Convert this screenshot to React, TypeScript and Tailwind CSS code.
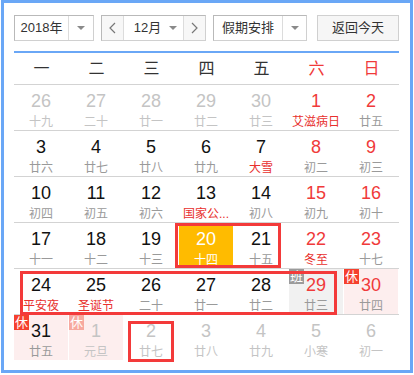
import React from "react";

type Day = {
  n: number;
  l: string;
  out?: boolean;
  red?: boolean;
  lred?: boolean;
  today?: boolean;
  badge?: "休" | "班";
  bg?: "pink" | "gray";
  fade?: boolean;
};

const rows: Day[][] = [
  [
    { n: 26, l: "十九", out: true },
    { n: 27, l: "二十", out: true },
    { n: 28, l: "廿一", out: true },
    { n: 29, l: "廿二", out: true },
    { n: 30, l: "廿三", out: true },
    { n: 1, l: "艾滋病日", red: true, lred: true },
    { n: 2, l: "廿五", red: true },
  ],
  [
    { n: 3, l: "廿六" },
    { n: 4, l: "廿七" },
    { n: 5, l: "廿八" },
    { n: 6, l: "廿九" },
    { n: 7, l: "大雪", lred: true },
    { n: 8, l: "初二", red: true },
    { n: 9, l: "初三", red: true },
  ],
  [
    { n: 10, l: "初四" },
    { n: 11, l: "初五" },
    { n: 12, l: "初六" },
    { n: 13, l: "国家公...", lred: true },
    { n: 14, l: "初八" },
    { n: 15, l: "初九", red: true },
    { n: 16, l: "初十", red: true },
  ],
  [
    { n: 17, l: "十一" },
    { n: 18, l: "十二" },
    { n: 19, l: "十三" },
    { n: 20, l: "十四", today: true },
    { n: 21, l: "十五" },
    { n: 22, l: "冬至", red: true, lred: true },
    { n: 23, l: "十七", red: true },
  ],
  [
    { n: 24, l: "平安夜", lred: true },
    { n: 25, l: "圣诞节", lred: true },
    { n: 26, l: "二十" },
    { n: 27, l: "廿一" },
    { n: 28, l: "廿二" },
    { n: 29, l: "廿三", red: true, badge: "班", bg: "gray" },
    { n: 30, l: "廿四", red: true, badge: "休", bg: "pink" },
  ],
  [
    { n: 31, l: "廿五", badge: "休", bg: "pink" },
    { n: 1, l: "元旦", out: true, badge: "休", bg: "pink", fade: true },
    { n: 2, l: "廿七", out: true },
    { n: 3, l: "廿八", out: true },
    { n: 4, l: "廿九", out: true },
    { n: 5, l: "小寒", out: true },
    { n: 6, l: "初一", out: true },
  ],
];

const weekdays = ["一", "二", "三", "四", "五", "六", "日"];

function Caret() {
  return <span className="w-0 h-0 border-l-[4px] border-r-[4px] border-t-[4px] border-l-transparent border-r-transparent border-t-[#8a8a8a]" />;
}

function Cell({ d }: { d: Day }) {
  let bg = "";
  if (d.today) bg = "bg-[#ffbb00]";
  else if (d.bg === "pink") bg = "bg-[#fdeeee]";
  else if (d.bg === "gray") bg = "bg-[#f1f1f1]";

  let numColor = "text-[#111]";
  let lunarColor = "text-[#9a9a9a]";
  if (d.out) {
    numColor = "text-[#c4c4c4]";
    lunarColor = "text-[#c4c4c4]";
  } else if (d.red) numColor = "text-[#f03a3a]";
  if (!d.out && d.lred) lunarColor = "text-[#e8302e]";
  if (d.today) {
    numColor = "text-white";
    lunarColor = "text-white";
  }

  return (
    <div className="relative h-[45px]">
      <div className={`h-full mr-px flex flex-col items-center pt-[6px] ${bg}`}>
        <span className={`text-[18px] leading-[20px] ${numColor}`}>{d.n}</span>
        <span className={`text-[12px] leading-[16px] mt-[3px] whitespace-nowrap ${lunarColor}`}>{d.l}</span>
      </div>
      {d.badge && (
        <span
          className={`absolute left-0 top-0 w-[15px] h-[15px] text-[13px] leading-[15px] text-center text-white ${
            d.badge === "班" ? "bg-[#9b9b9b]" : d.fade ? "bg-[#f7a99f]" : "bg-[#f5402e]"
          }`}
        >
          {d.badge}
        </span>
      )}
    </div>
  );
}

export default function App() {
  return (
    <div className="relative w-[414px] h-[375px] bg-white font-['Liberation_Sans','Noto_Sans_CJK_SC',sans-serif] text-[#333]">
      <div className="ml-px w-[412px] h-[373px] border-[3px] border-[#6aa7f6] pl-[10px] pr-[11px] pt-[12px]">
        {/* toolbar */}
        <div className="flex h-[26px] text-[13px]">
          <div className="w-[80px] flex border border-[#b9b9b9] border-r-[#d0d0d0] border-b-[#d0d0d0]">
            <div className="w-[54px] flex items-center justify-center border-r border-[#dcdcdc]">2018年</div>
            <div className="flex-1 flex items-center justify-center"><Caret /></div>
          </div>
          <div className="ml-[7px] w-[105px] flex border border-[#b9b9b9] border-r-[#d0d0d0] border-b-[#d0d0d0]">
            <div className="w-[22px] flex items-center justify-center bg-[#f7f7f7] border-r border-[#dcdcdc]">
              <svg width="7" height="12" viewBox="0 0 7 12"><polyline points="6,1 1,6 6,11" fill="none" stroke="#777" strokeWidth="1.2" /></svg>
            </div>
            <div className="w-[59px] flex items-center justify-center gap-[8px] pl-[4px]">
              <span>12月</span>
              <Caret />
            </div>
            <div className="flex-1 flex items-center justify-center bg-[#f7f7f7] border-l border-[#dcdcdc]">
              <svg width="7" height="12" viewBox="0 0 7 12"><polyline points="1,1 6,6 1,11" fill="none" stroke="#777" strokeWidth="1.2" /></svg>
            </div>
          </div>
          <div className="ml-[7px] w-[94px] flex border border-[#b9b9b9] border-r-[#d0d0d0] border-b-[#d0d0d0]">
            <div className="w-[69px] flex items-center justify-center border-r border-[#dcdcdc]">假期安排</div>
            <div className="flex-1 flex items-center justify-center"><Caret /></div>
          </div>
          <button className="ml-[10px] w-[82px] flex items-center justify-center bg-[#f6f6f6] border border-[#d0d0d0] text-[#333]">
            返回今天
          </button>
        </div>

        <div className="mt-[10px] h-[2px] bg-[#6aa7f6]" />

        {/* weekday header */}
        <div className="grid grid-cols-7 h-[32px] border-b border-[#d3d3d3] text-[16px]">
          {weekdays.map((w, i) => (
            <div key={w} className={`flex items-center justify-center ${i >= 5 ? "text-[#f03a3a]" : "text-[#333]"}`}>
              {w}
            </div>
          ))}
        </div>

        {rows.map((r, ri) => (
          <div key={ri} className={`grid grid-cols-7 ${ri < 5 ? "border-b border-[#d3d3d3]" : ""}`}>
            {r.map((d, ci) => (
              <Cell key={ci} d={d} />
            ))}
          </div>
        ))}
      </div>

      {/* annotation boxes */}
      <div className="absolute left-[175px] top-[223px] w-[106px] h-[45px] border-[3px] border-[#f33a3a]" />
      <div className="absolute left-[20px] top-[271px] w-[317px] h-[44px] border-[3px] border-[#f33a3a]" />
      <div className="absolute left-[128px] top-[321px] w-[46px] h-[41px] border-[3px] border-[#f33a3a]" />
    </div>
  );
}
